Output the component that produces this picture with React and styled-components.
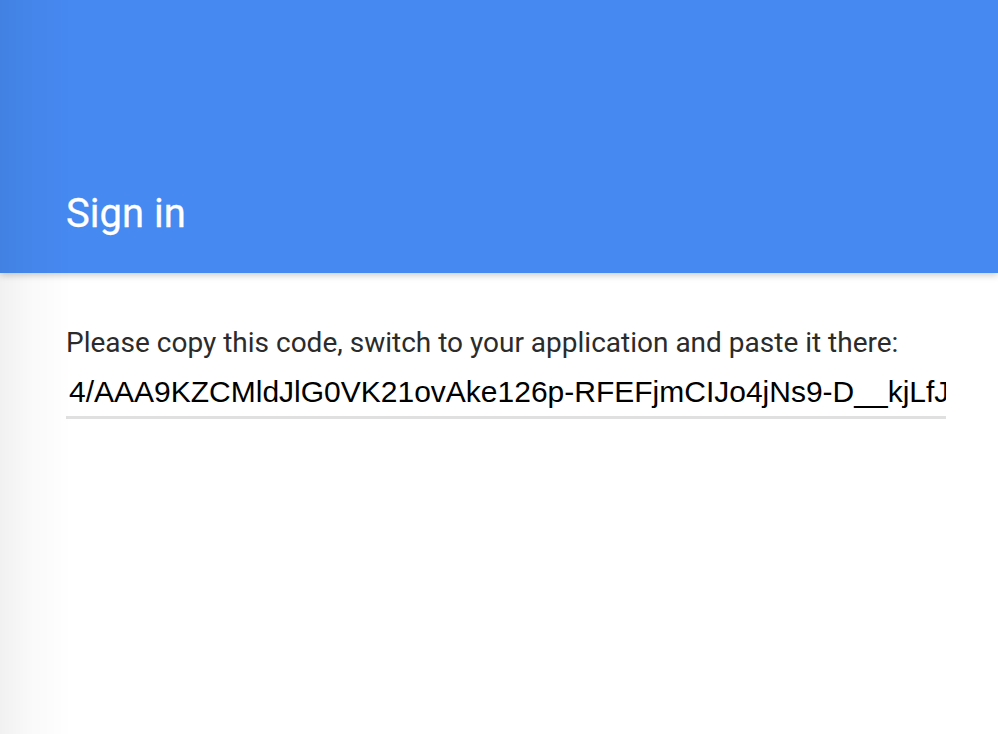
import React from "react";
import styled, { createGlobalStyle } from "styled-components";

const GlobalStyle = createGlobalStyle`
html, body {
  margin: 0;
  padding: 0;
  background: #fff;
  height: 100%;
}
body::before {
  content: "";
  position: fixed;
  top: 0;
  left: 0;
  bottom: 0;
  width: 72px;
  background: linear-gradient(to right, rgba(0,0,0,0.055), rgba(0,0,0,0.025) 40%, rgba(0,0,0,0));
  pointer-events: none;
  z-index: 10;
}
`;

const Page = styled.div`
min-height: 734px;
font-family: Roboto, "Noto Sans", sans-serif;
`;

const Header = styled.header`
height: 273px;
box-sizing: border-box;
background-color: #4689f0;
display: flex;
align-items: flex-end;
padding: 0 66px 36px;
box-shadow: 0 2px 7px rgba(0,0,0,0.22);
position: relative;
`;

const Title = styled.h1`
margin: 0;
color: #fff;
font-size: 40px;
font-weight: 400;
line-height: normal;
-webkit-text-stroke: 0.3px #fff;
`;

const Main = styled.main`
padding: 53px 66px 0;
`;

const Label = styled.p`
margin: 0;
font-size: 28px;
line-height: normal;
color: #2b2b2b;
`;

const CodeInput = styled.input`
display: block;
margin-top: 12px;
width: 880px;
box-sizing: border-box;
padding: 4px 0 7px 3px;
border: none;
border-bottom: 3px solid #e0e0e0;
outline: none;
background: transparent;
font-family: "Liberation Sans", Arial, sans-serif;
font-size: 30px;
line-height: normal;
color: #000;
`;

const CODE = "4/AAA9KZCMldJlG0VK21ovAke126p-RFEFjmCIJo4jNs9-D__kjLfJxQ8";

export default function App() {
  return (
    <Page>
      <GlobalStyle />
      <Header>
        <Title>Sign in</Title>
      </Header>
      <Main>
        <Label>Please copy this code, switch to your application and paste it there:</Label>
        <CodeInput readOnly value={CODE} />
      </Main>
    </Page>
  );
}
